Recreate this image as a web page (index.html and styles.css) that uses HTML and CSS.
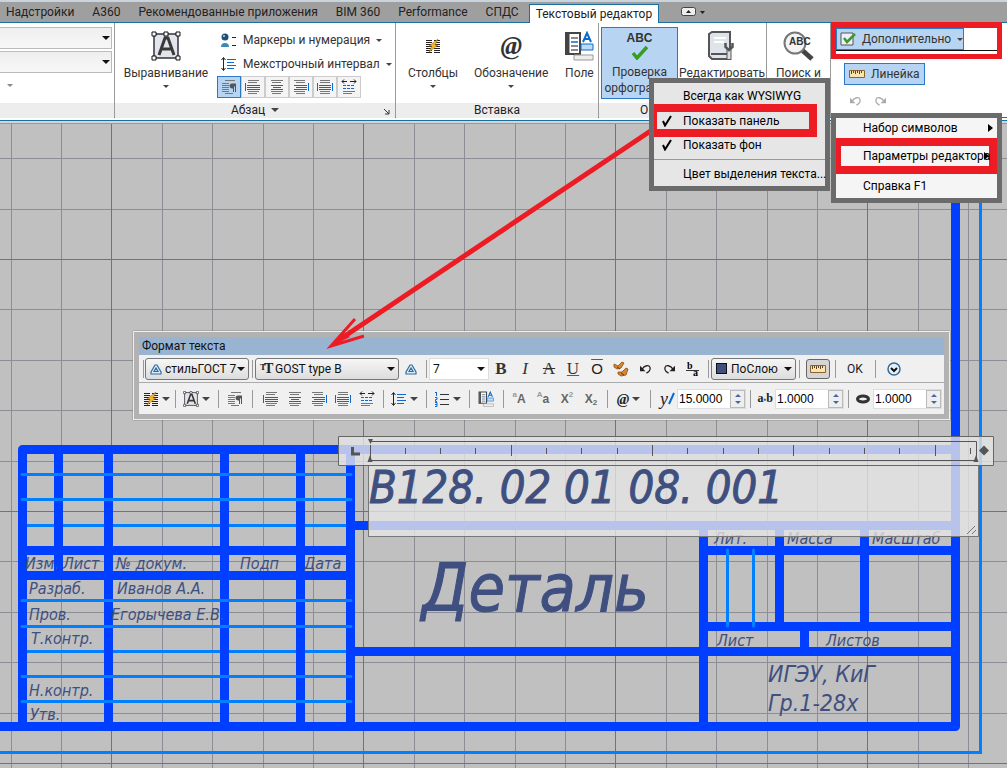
FILE: index.html
```html
<!DOCTYPE html>
<html lang="ru">
<head>
<meta charset="utf-8">
<title>Текстовый редактор</title>
<link rel="stylesheet" href="styles.css">
</head>
<body>
<svg class="defs" aria-hidden="true">
  <defs>
    <symbol id="i-para" viewBox="0 0 16 16"><path d="M4 1.500h10M1 4.500h7M1 6.500h7M1 8.500h7M1 10.500h7M1 12.500h7M4 14.500h8" stroke="#777" /><path d="M12.500 5v8M14.500 5v8" stroke="#555"/><path d="M15 4.500h-4a2.500 2.500 0 0 0 0 5h1.500z" fill="#555"/></symbol>
    <symbol id="i-al1" viewBox="0 0 16 16"><path d="M3 1.500h11M3 3.500h9M3 12.500h11M3 14.500h9" stroke="#777"/><path d="M.5 4v8M2 6.500h13M2 8.500h13M2 10.500h13" stroke="#0a6ad0"/></symbol>
    <symbol id="i-al2" viewBox="0 0 16 16"><path d="M2 1.500h12M3 3.500h9M2 12.500h12M3 14.500h9" stroke="#777"/><path d="M2 6.500h12M4 8.500h8M2 10.500h12" stroke="#0a6ad0"/></symbol>
    <symbol id="i-al3" viewBox="0 0 16 16"><path d="M1 1.500h11M3 3.500h9M1 12.500h11M3 14.500h9" stroke="#777"/><path d="M15.500 4v8M1 6.500h13M3 8.500h11M1 10.500h13" stroke="#0a6ad0"/></symbol>
    <symbol id="i-al4" viewBox="0 0 16 16"><path d="M3 1.500h10M3 3.500h10M3 12.500h10M3 14.500h10" stroke="#777"/><path d="M.5 4v8M15.500 4v8M2 6.500h12M2 8.500h12M2 10.500h12" stroke="#0a6ad0"/></symbol>
    <symbol id="i-al5" viewBox="0 0 16 16"><path d="M1 2.500h5M9 2.500h6M3 .500L1 2.500l2 2M13 .500l2 2-2 2" stroke="#222" fill="none"/><path d="M2 6.500h12M2 9.500h12" stroke="#0a6ad0" stroke-dasharray="3 1"/><path d="M2 12.500h12M2 14.500h9" stroke="#777"/></symbol>
    <symbol id="i-cols" viewBox="0 0 16 16"><path d="M1 2.500h6M1 4.500h6M1 6.500h6M1 8.500h6M1 10.500h6M1 12.500h6M1 14.500h6M9 2.500h6M9 4.500h6M9 6.500h6M9 8.500h6M9 10.500h6M9 12.500h6M9 14.500h6" stroke="#222"/><path d="M13 1L4 8h3l-3 6 9-7h-3z" fill="#f7b52c" stroke="#9a6412" stroke-width=".5"/></symbol>
    <symbol id="i-box" viewBox="0 0 30 30"><path d="M3 3h24v24H3z" fill="#e3e5ea" stroke="#334" stroke-width="1.500"/><path d="M8 24L14 7h3l6 17M10.500 18h10" fill="none" stroke="#3a3a3a" stroke-width="3"/><path d="M1 1h4v4H1zM13 1h4v4h-4zM25 1h4v4h-4zM1 25h4v4H1zM25 25h4v4h-4z" fill="#fff" stroke="#111"/></symbol>
    <symbol id="i-lines" viewBox="0 0 16 16"><path d="M2.500 2v12M.5 4l2-2.500 2 2.500M.5 12l2 2.500 2-2.500" stroke="#222" fill="none"/><path d="M6 3.500h9M6 6.500h7M6 9.500h9M6 12.500h7" stroke="#0a6ad0"/></symbol>
    <symbol id="i-field" viewBox="0 0 30 30"><path d="M2 2h14v21H2z" fill="#fff" stroke="#444" stroke-width="2"/><path d="M4 2v21" stroke="#444" stroke-width="3"/><path d="M7 7h7M7 15h7M7 19h7" stroke="#666" stroke-width="1.500"/><path d="M7 11h7" stroke="#0a6ad0" stroke-width="1.500"/><path d="M19 11l4-9 4 9M20.500 8h5" fill="none" stroke="#0a6ad0" stroke-width="2"/><path d="M17 13h12v6H17z" fill="#bcdcf5" stroke="#0a6ad0"/><path d="M10 24h19v5H10z" fill="#eee" stroke="#999"/></symbol>
    <symbol id="i-undo" viewBox="0 0 14 12"><path d="M3 7c3-5 8-5 9-2 .5 3-2 5-4 6" fill="none" stroke="currentColor" stroke-width="1.400"/><path d="M1 3v6h6z" fill="currentColor"/></symbol>
    <symbol id="i-redo" viewBox="0 0 14 12"><path d="M11 7C8 2 3 2 2 5c-.5 3 2 5 4 6" fill="none" stroke="currentColor" stroke-width="1.400"/><path d="M13 3v6H7z" fill="currentColor"/></symbol>
    <symbol id="i-ruler" viewBox="0 0 16 8"><path d="M.5.500h15v7H.5z" fill="#fbe3ae" stroke="#8a6330"/><path d="M2.500 1v3M4.500 1v2M6.500 1v3M8.500 1v2M10.500 1v3M12.500 1v2" stroke="#5f4018"/></symbol>
    <symbol id="i-style" viewBox="0 0 12 12"><path d="M5 2h2l4 7v2H1V9zM6 5L4 8.500h4z" fill="#dcecf8" fill-rule="evenodd" stroke="#2f6d9e" stroke-width="1.200"/></symbol>
    <symbol id="i-check" viewBox="0 0 10 12"><path d="M1 6l2 4.500L9 1" fill="none" stroke="#000" stroke-width="2"/></symbol>
  </defs>
</svg>

<header class="ribbon">
  <nav class="tabs">
    <a href="#">Надстройки</a><a href="#">A360</a><a href="#">Рекомендованные приложения</a><a href="#">BIM 360</a><a href="#">Performance</a><a href="#">СПДС</a><a href="#" class="active">Текстовый редактор</a>
    <button class="collapse" aria-label="Свернуть ленту"><svg width="26" height="10"><rect x=".5" y=".5" width="14" height="8" rx="2" fill="#eee" stroke="#444"/><path d="M5 6l2.500-3L10 6zM19 4h5l-2.500 3z" fill="#222"/></svg></button>
  </nav>
  <div class="panels">
    <section class="panel p-style">
      <div class="body">
        <span class="drop wide"><select aria-label="Слой"><option></option></select></span>
        <span class="drop wide"><select aria-label="Цвет"><option></option></select></span>
        <i class="tri pale"></i>
      </div>
      <h2>&nbsp;</h2>
    </section>
    <section class="panel p-para">
      <div class="body">
        <button class="big"><svg width="30" height="30"><use href="#i-box"/></svg><span>Выравнивание</span><i class="tri"></i></button>
        <div class="rows">
          <button class="line"><svg width="16" height="16"><circle cx="4" cy="5" r="3.500" fill="#1d4f78"/><circle cx="3" cy="4" r="1" fill="#cde"/><path d="M0 15a4 4 0 0 1 8 0z" fill="#3c88b8"/><path d="M11 5.500h4M11 13.500h4" stroke="#222"/></svg><span>Маркеры и нумерация</span><i class="tri"></i></button>
          <button class="line"><svg width="16" height="16"><use href="#i-lines"/></svg><span>Межстрочный интервал</span><i class="tri"></i></button>
          <div class="aligns">
            <button class="on" aria-label="По умолчанию"><svg width="16" height="16"><use href="#i-para"/></svg></button><button aria-label="Влево"><svg width="16" height="16"><use href="#i-al1"/></svg></button><button aria-label="По центру"><svg width="16" height="16"><use href="#i-al2"/></svg></button><button aria-label="Вправо"><svg width="16" height="16"><use href="#i-al3"/></svg></button><button aria-label="По ширине"><svg width="16" height="16"><use href="#i-al4"/></svg></button><button aria-label="Распределить"><svg width="16" height="16"><use href="#i-al5"/></svg></button>
          </div>
        </div>
      </div>
      <h2>Абзац <i class="tri big-tri"></i><svg class="launch" width="6" height="6"><path d="M0 0l5 5M5 1v4H1" fill="none" stroke="#333"/></svg></h2>
    </section>
    <section class="panel p-insert">
      <div class="body">
        <button class="big"><svg width="30" height="30" viewBox="-7 -7 30 30"><use href="#i-cols" width="16" height="16"/></svg><span>Столбцы</span><i class="tri"></i></button>
        <button class="big"><b class="at">@</b><span>Обозначение</span><i class="tri"></i></button>
        <button class="big"><svg width="30" height="30"><use href="#i-field"/></svg><span>Поле</span></button>
      </div>
      <h2>Вставка</h2>
    </section>
    <section class="panel p-spell">
      <div class="body">
        <button class="big on"><span class="abc">ABC</span><svg class="tick" width="18" height="15"><path d="M2 8l4 5L16 2" fill="none" stroke="#3a9d23" stroke-width="3.500"/></svg><span>Проверка орфографии</span></button>
        <button class="big"><svg width="30" height="30"><path d="M5 1h18v27H5l-3-3V3z" fill="#dfe3ea" stroke="#555" stroke-width="2"/><path d="M4 23h19" stroke="#555" stroke-width="2"/><path d="M7 7h12M7 11h10" stroke="#fff" stroke-width="2"/><path d="M22 29V18" stroke="#555" stroke-width="5"/><path d="M22 28V18" stroke="#ddd" stroke-width="3"/><path d="M18.500 12v4l3.500 3 3.500-3v-4" fill="none" stroke="#555" stroke-width="2.500"/></svg><span>Редактировать</span></button>
      </div>
      <h2>О</h2>
    </section>
    <section class="panel p-find">
      <div class="body">
        <button class="big"><svg width="32" height="30"><path d="M19 19l10 9" stroke="#444" stroke-width="5"/><circle cx="12" cy="12" r="10.500" fill="#f4f4f4" stroke="#777" stroke-width="2"/><text x="6" y="14" class="abc-s">ABC</text></svg><span>Поиск и</span></button>
      </div>
      <h2>&nbsp;</h2>
    </section>
    <section class="panel p-tools">
      <div class="frame-top"><button class="chip more"><svg width="16" height="14"><path d="M1 1h12v12H1z" fill="#eef" stroke="#555"/><path d="M4 6l3 4 8-8" fill="none" stroke="#3a9d23" stroke-width="2.500"/></svg>Дополнительно<i class="tri"></i></button></div>
      <button class="chip ruler-btn"><svg width="16" height="8"><use href="#i-ruler"/></svg>Линейка</button>
      <div class="history"><button aria-label="Отменить"><svg width="13" height="11"><use href="#i-undo"/></svg></button><button aria-label="Повторить"><svg width="13" height="11"><use href="#i-redo"/></svg></button></div>
    </section>
  </div>
</header>

<main class="canvas">
  <svg class="drawing" width="100%" height="100%">
    <g transform="translate(0 -124)">
      <defs>
        <pattern id="grid" x="111" y="259" width="252" height="252" patternUnits="userSpaceOnUse">
          <path d="M51.500 0v252M101.500 0v252M152.500 0v252M202.500 0v252M0 50.500h252M0 101.500h252M0 151.500h252M0 202.500h252" stroke="#8d8d96"/>
          <path d="M.5 0v252M0 .5h252" stroke="#717180"/>
        </pattern>
      </defs>
      <rect x="0" y="0" width="100%" height="200%" fill="url(#grid)"/>
      <g class="thin"><path d="M22 525.500H350M22 651.500H350"/></g>
      <g class="thick">
        <path d="M22.500 726.500V449.500H955.500M955.500 180V726.500H0M58.500 450V575M108.500 450V726M224.500 450V726M300.500 450V726M350.500 450V726M22 550.500H350M22 575.500H350M350 525.500H955M350 651.500H955M703.500 525V726M779.500 525V626M864.500 525V626M703 550.500H955M703 626.500H955M804.500 626V651"/>
      </g>
      <g class="thin">
        <path d="M22 474.500H351M22 499.500H351M22 600.500H351M22 626.500H351M22 676.500H351M22 701.500H351M727.500 550V626M753.500 550V626M0 752.500H980.500V180"/>
      </g>
      <g class="gost small">
        <text x="25" y="569">Изм.</text><text x="63" y="569">Лист</text><text x="116" y="569">№ докум.</text><text x="240" y="569">Подп</text><text x="304" y="569">Дата</text>
        <text x="29" y="594">Разраб.</text><text x="117" y="594">Иванов А.А.</text>
        <text x="29" y="620">Пров.</text><text x="111" y="620">Егорычева Е.В.</text>
        <text x="31" y="644">Т.контр.</text><text x="29" y="696">Н.контр.</text><text x="30" y="720">Утв.</text>
        <text x="714" y="544">Лит.</text><text x="787" y="544">Масса</text><text x="872" y="544">Масштаб</text>
        <text x="717" y="646">Лист</text><text x="826" y="646">Листов</text>
      </g>
      <g class="gost medium"><text x="768" y="682">ИГЭУ, КиГ</text><text x="768" y="711">Гр.1-28х</text></g>
      <text class="gost title" x="422" y="611">Деталь</text>
    </g>
  </svg>

  <div class="editor">
    <svg class="scale" width="656" height="30">
      <path d="M.5.500h655v29H.5z" fill="#e5e5e5" fill-opacity=".8" stroke="#666"/>
      <path d="M32 5.500h606.500v19H32" fill="none" stroke="#555"/>
      <path d="M32.500 9v13M173.500 9v11M314.500 9v11M455.500 9v11M597.500 9v11M67.500 12v6M102.500 12v6M137.500 12v6M208.500 12v6M243.500 12v6M279.500 12v6M349.500 12v6M385.500 12v6M420.500 12v6M491.500 12v6M526.500 12v6M561.500 12v6M632.500 12v6" stroke="#555"/>
      <path d="M30 3h5l-2.500 5zM29.500 26h5L32 19zM635.500 26h5L638 19zM646 9.500l5 5-5 5-5-5z" fill="#555"/>
      <path d="M14.500 11v7H22" fill="none" stroke="#555" stroke-width="3"/>
    </svg>
    <input class="gost text" aria-label="Текст" value="B128. 02 01 08. 001">
    <svg class="grip" width="10" height="10"><path d="M0 9l8-8M5 9l4-4" stroke="#777"/></svg>
  </div>

  <section class="format" aria-label="Формат текста">
    <h2>Формат текста</h2>
    <div class="row r1">
      <i class="sep handle"></i>
      <span class="drop btnlike w-style"><svg width="12" height="12"><use href="#i-style"/></svg><select aria-label="Стиль"><option>стильГОСТ 7</option></select></span>
      <i class="sep"></i>
      <span class="drop btnlike w-font"><b class="tt"><small>T</small>T</b><select aria-label="Шрифт"><option>GOST type B</option></select></span>
      <button aria-label="Аннотативный"><svg width="12" height="12"><use href="#i-style"/></svg></button>
      <i class="sep"></i>
      <span class="drop size"><select aria-label="Высота"><option>7</option></select></span>
      <button class="serif"><b>B</b></button><button class="serif"><em>I</em></button><button class="serif"><s>A</s></button><button class="serif under">U</button><button class="sans over">O</button>
      <button aria-label="Копировать формат"><svg width="16" height="16"><path d="M1 3l4 2 4-4 2 1-3 5-4 1-3-2zM5 11l4 0 4-4 2 1-2 6-5 1-3-2z" fill="#d8882c" stroke="#8a4b12" stroke-width=".8"/><path d="M4 6l3 2M8 12l3 2" stroke="#6b3508"/></svg></button>
      <button aria-label="Отменить"><svg width="13" height="11"><use href="#i-undo"/></svg></button><button aria-label="Повторить"><svg width="13" height="11"><use href="#i-redo"/></svg></button>
      <button class="stack" aria-label="Дробь"><svg width="16" height="16"><text x="2" y="8">b</text><path d="M1 9.500h13" stroke="#333"/><text x="8" y="15">a</text></svg></button>
      <i class="sep"></i>
      <span class="drop btnlike w-color"><i class="swatch"></i><select aria-label="Цвет"><option>ПоСлою</option></select></span>
      <i class="sep"></i>
      <button class="pressed" aria-label="Линейка"><svg width="16" height="8"><use href="#i-ruler"/></svg></button>
      <i class="sep"></i>
      <button class="ok">OK</button>
      <i class="sep"></i>
      <button class="opt" aria-label="Параметры"><svg width="14" height="14"><circle cx="7" cy="7" r="6" fill="#e8f0f8" stroke="#356a98" stroke-width="1.500"/><path d="M4 6l3 3 3-3" fill="none" stroke="#111" stroke-width="2"/></svg></button>
    </div>
    <div class="row r2">
      <button class="dd"><svg width="16" height="16"><use href="#i-cols"/></svg><i class="tri"></i></button>
      <i class="sep"></i>
      <button class="dd wide"><svg width="16" height="16"><use href="#i-box"/></svg><i class="tri"></i></button>
      <i class="sep"></i>
      <button class="w26" aria-label="Абзац"><svg width="16" height="16"><use href="#i-para"/></svg></button>
      <i class="sep"></i>
      <span class="group"><button aria-label="Влево"><svg width="16" height="16"><use href="#i-al1"/></svg></button><button aria-label="По центру"><svg width="16" height="16"><use href="#i-al2"/></svg></button><button aria-label="Вправо"><svg width="16" height="16"><use href="#i-al3"/></svg></button><button aria-label="По ширине"><svg width="16" height="16"><use href="#i-al4"/></svg></button><button aria-label="Распределить"><svg width="16" height="16"><use href="#i-al5"/></svg></button></span>
      <i class="sep"></i>
      <button class="dd wide"><svg width="16" height="16"><use href="#i-lines"/></svg><i class="tri"></i></button>
      <i class="sep"></i>
      <button class="dd wide"><svg width="16" height="16"><path d="M6 3.500h9M6 8.500h9M6 13.500h9" stroke="#333"/><path d="M2.500 1v4M1 1.500h1.500M1 6.500h2v2H1.500v2H3M1 11.500h2v4H1M1 13.500h2" fill="none" stroke="#0a6ad0"/></svg><i class="tri"></i></button>
      <i class="sep"></i>
      <button class="w26" aria-label="Поле"><svg width="16" height="16"><use href="#i-field"/></svg></button>
      <i class="sep"></i>
      <button class="cs"><small class="hi">a</small>A</button><button class="cs"><small class="hi">A</small>a</button><button class="cs">X<sup>2</sup></button><button class="cs">X<sub>2</sub></button>
      <i class="sep"></i>
      <button class="dd wide"><b class="at-s">@</b><i class="tri"></i></button>
      <i class="sep"></i>
      <label class="spin first"><span class="slant">y<svg width="7" height="13"><path d="M1 12L6 1" stroke="#0a6ad0" stroke-width="2"/></svg></span><span class="num"><input value="15.0000" aria-label="Угол наклона"><i class="ud"></i></span></label>
      <i class="sep"></i>
      <label class="spin"><span class="ab">a<i>▪</i>b</span><span class="num"><input value="1.0000" aria-label="Межсимвольный интервал"><i class="ud"></i></span></label>
      <i class="sep"></i>
      <label class="spin"><svg width="16" height="10"><ellipse cx="8" cy="5" rx="5.500" ry="3" fill="none" stroke="#333" stroke-width="3"/></svg><span class="num"><input value="1.0000" aria-label="Коэффициент ширины"><i class="ud"></i></span></label>
    </div>
  </section>

  <svg class="callout" width="100%" height="100%">
    <path d="M652 6L336 218" stroke="#ed1c24" stroke-width="5"/>
    <path d="M355 195L331 222L364 212" fill="none" stroke="#ed1c24" stroke-width="3"/>
    <path d="M331 222L343 209L350 213z" fill="#ed1c24"/>
  </svg>
</main>

<div class="menu m-editor">
  <button>Всегда как WYSIWYG</button>
  <button class="marked"><svg width="10" height="12"><use href="#i-check"/></svg>Показать панель</button>
  <button><svg width="10" height="12"><use href="#i-check"/></svg>Показать фон</button>
  <hr>
  <button>Цвет выделения текста...</button>
</div>
<div class="menu m-more">
  <button>Набор символов<i class="arrow"></i></button>
  <button class="marked">Параметры редактора<i class="arrow"></i></button>
  <button>Справка F1</button>
</div>
</body>
</html>
```
FILE: styles.css
```css
* { box-sizing: border-box; }
body {
  margin: 0; min-height: 100vh; display: flex; flex-direction: column;
  position: relative; overflow: hidden;
  font: 12px/16px Roboto, "Open Sans", sans-serif; color: #333; background: #c0c0c0;
}
.defs { position: absolute; width: 0; height: 0; }
button { font: inherit; color: inherit; background: none; border: 0; padding: 0; margin: 0; }
h2 { margin: 0; font: inherit; }
svg { flex: none; }
.tri { display: inline-block; border: solid transparent; border-width: 3px 3px 0; border-top-color: #444; flex: none; }
.big-tri { border-width: 4px 4px 0; vertical-align: 2px; margin-left: 3px; }

/* ribbon */
.ribbon { height: 124px; background: #d4d4d4; border-bottom: 1px solid #999; display: flex; flex-direction: column; }
.tabs { height: 23px; flex: none; display: flex; align-items: flex-end; gap: 18px; padding-left: 6px; background: #9f9f9f; border-top: 2px solid #c9d4df; border-bottom: 1px solid #1a6fa3; }
.tabs a { color: #222; text-decoration: none; line-height: 19px; white-space: nowrap; }
.tabs .active { background: #fff; border: 1px solid #1a6fa3; border-bottom: 0; padding: 0 6px; margin: 0 0 -1px -8px; line-height: 18px; }
.collapse { align-self: center; height: 14px; margin-left: 4px; }
.panels { display: flex; height: 98px; flex: none; background: #fff; border-bottom: 1px solid #1a6fa3; }
.panel { border-right: 1px solid #9a9a9a; margin-bottom: 2px; border-bottom: 1px solid #1a6fa3; display: flex; flex-direction: column; flex: none; }
.panel .body { height: 80px; flex: none; display: flex; padding-top: 4px; }
.panel h2 { background: #ededed; text-align: center; height: 15px; line-height: 15px; color: #222; position: relative; flex: none; }
.launch { position: absolute; right: 5px; bottom: 3px; }
.p-style { width: 115px; }
.p-style .body { flex-direction: column; gap: 2px; }
.drop { position: relative; display: block; }
.drop select { appearance: none; font: inherit; color: #111; width: 100%; height: 100%; border: 1px solid #bbb; background: transparent; padding: 0 3px; margin: 0; display: block; border-radius: 0; }
.drop::after { content: ""; position: absolute; right: 4px; top: 50%; margin-top: -2px; border: solid transparent; border-width: 4px 4px 0; border-top-color: #111; pointer-events: none; }
.drop.wide { height: 22px; width: 113px; margin-left: -1px; background: linear-gradient(#eee, #f8f8f8); }
.drop.wide::after { right: 2px; }
.pale { margin: 9px 0 0 7px; align-self: flex-start; border-top-color: #888; }
.big { display: flex; flex-direction: column; align-items: center; padding-top: 4px; gap: 4px; }
.big span { line-height: 16px; }
.p-para { width: 281px; }
.p-para .big { width: 102px; }
.rows { display: flex; flex-direction: column; }
.line { height: 24px; display: flex; align-items: center; gap: 6px; padding: 2px 0 0 4px; white-space: nowrap; }
.aligns { display: flex; margin-top: 1px; }
.aligns button { width: 24px; height: 22px; border: 1px solid #ccc; background: #f4f4f4; display: grid; place-items: center; }
.aligns .on { background: #b7d5f2; border-color: #2b78c5; }
.p-insert { width: 203px; }
.p-insert .body { gap: 16px; padding-left: 12px; }
.p-insert .big { min-width: 29px; }
.at { font: bold italic 26px/30px "Liberation Serif", serif; }
.p-spell { width: 168px; }
.p-spell .body { padding-left: 2px; gap: 2px; }
.p-spell h2 { text-align: left; padding-left: 41px; }
.p-spell .big { width: 84px; }
.p-spell .big.on { width: 77px; height: 72px; background: #b7d5f2; border: 1px solid #2b78c5; gap: 0; }
.p-spell .on .tick { margin-bottom: 4px; }
.p-spell .on span:last-child { width: 74px; }
.big .abc { font: bold 12px/13px "Liberation Sans", sans-serif; }
.abc-s { font: bold 10px "Liberation Sans", sans-serif; fill: #333; }
.p-find { width: 64px; align-items: stretch; }
.p-find .body { justify-content: center; }
.p-tools { flex: 1; border-right: 0; align-items: flex-start; }
.frame-top { width: 171px; height: 37px; margin-top: -1px; border: 5px solid #ed1c24; border-top-width: 6px; background: linear-gradient(#111, #111) 0 22px / 100% 1px no-repeat #fff; position: relative; }
.chip { display: flex; align-items: center; gap: 6px; height: 22px; background: #b7d5f2; border: 1px solid #2b78c5; padding: 0 4px; }
.more { width: 128px; white-space: nowrap; padding: 0 3px; }
.ruler-btn { margin: 4px 0 0 13px; }
.history { display: flex; gap: 12px; margin: 9px 0 0 18px; color: #aaa; height: 11px; }
.history button { display: block; height: 11px; }

/* drawing */
.canvas { flex: 1; position: relative; min-height: 0; }
.drawing, .callout { position: absolute; inset: 0; display: block; }
.callout { pointer-events: none; }
.thick { stroke: #003fff; stroke-width: 9; fill: none; stroke-linejoin: round; }
.thin { stroke: #007fff; stroke-width: 3; fill: none; stroke-linecap: round; }
.gost { font-family: "DejaVu Sans Condensed", "DejaVu Sans", sans-serif; font-style: italic; fill: #3f4f80; color: #3f4f80; }
.small { font-size: 16px; }
.medium { font-size: 23px; }
.title { font-size: 66px; stroke: #3f4f80; stroke-width: 1; }

.editor { position: absolute; left: 338px; top: 312px; width: 656px; }
.scale { display: block; }
.editor .text { display: block; margin: -1px 0 0 30px; width: 611px; height: 72px; border: 1px solid #777; background: rgba(229, 229, 229, .8); font-size: 45px; padding: 0 0 28px; -webkit-text-stroke: 1px #3f4f80; }
.grip { position: absolute; right: 17px; bottom: 2px; }

/* floating toolbar */
.format { position: absolute; left: 133px; top: 207px; width: 817px; border: 6px solid #b2b2b2; outline: 1px solid #eee; outline-offset: -1px; background: #f0f0f0; box-shadow: 0 0 1px #444; color: #222; }
.format > h2 { background: #99b4d1; line-height: 18px; padding-left: 3px; color: #111; }
.row { display: flex; align-items: center; padding-left: 3px; }
.r1 { height: 28px; border-bottom: 1px solid #aaa; }
.r2 { height: 31px; }
.row button { width: 24px; height: 22px; display: flex; align-items: center; justify-content: center; flex: none; }
.sep { width: 6px; height: 18px; flex: none; background: linear-gradient(#999, #999) center / 1px 100% no-repeat; }
.handle { width: 3px; }
.r2 .sep { width: 8px; }
.row .drop { height: 22px; flex: none; }
.btnlike select { border: 1px solid #777; border-radius: 3px; background: linear-gradient(#f6f6f6, #ddd); padding: 0 0 0 19px; }
.btnlike > svg, .btnlike > b, .btnlike > i { position: absolute; left: 5px; top: 5px; z-index: 1; }
.w-style { width: 104px; }
.w-font { width: 144px; }
.w-color { width: 85px; }
.tt { font: bold 14px/12px "Liberation Serif", serif; display: flex; }
.tt small { font-size: 9px; line-height: 8px; margin-right: -2px; }
.swatch { width: 11px; height: 11px; background: #3f4f80; border: 1px solid #111; }
.size { width: 60px; }
.size select { background: #fff; border-color: #ddd; }
.row .serif { font: 17px/20px "Liberation Serif", serif; color: #333; }
.row .sans { font: 15px/16px "Liberation Sans", sans-serif; }
.under { text-decoration: underline; text-decoration-color: #0a6ad0; }
.over { text-decoration: overline; text-decoration-color: #0a6ad0; }
.stack text { font: bold 10px "Liberation Serif", serif; }
.row .pressed { width: 24px; height: 20px; border: 1px solid #666; border-radius: 3px; background: #d5d5d5; margin: 0 2px 0 4px; }
.row .ok { width: 34px; }
.row .opt { width: 32px; }
.row .dd { width: 29px; gap: 3px; }
.dd .tri { border-width: 4px 4px 0; }
.row .dd.wide { width: 35px; }
.row .w26 { width: 26px; }
.group { display: flex; width: 123px; padding-left: 3px; }
.row .cs { font: bold 12px/20px "Liberation Sans", sans-serif; color: #666; }
.cs small, .cs sup, .cs sub { font-size: 8px; line-height: 8px; }
.cs .hi, .cs sup { align-self: flex-start; color: #999; margin-top: 3px; }
.cs sub { align-self: flex-end; margin-bottom: 3px; }
.at-s { font: bold italic 15px/16px "Liberation Serif", serif; }
.spin { display: flex; align-items: center; justify-content: flex-end; gap: 2px; width: 90px; flex: none; }
.spin.first { width: 92px; }
.slant { font: italic 18px/20px "Liberation Serif", serif; }
.ab { font: bold 12px/16px "Liberation Serif", serif; white-space: nowrap; }
.ab i { color: #0a6ad0; font-size: 8px; }
.num { display: flex; width: 69px; height: 20px; background: #fff; border: 1px solid #ddd; }
.num input { width: 52px; border: 0; padding: 0 0 0 1px; font: 12px/18px "Liberation Sans", sans-serif; background: none; min-width: 0; }
.ud { width: 15px; flex: none; border: 1px solid #bbb; background: #eee; position: relative; }
.ud::before, .ud::after { content: ""; position: absolute; left: 4px; border: solid transparent; }
.ud::before { top: 3px; border-width: 0 3px 3px; border-bottom-color: #46a; }
.ud::after { bottom: 3px; border-width: 3px 3px 0; border-top-color: #46a; }

/* menus */
.menu { position: absolute; border: 5px solid #6b6b6b; color: #000; display: flex; flex-direction: column; }
.menu button { text-align: left; display: flex; align-items: center; white-space: nowrap; position: relative; }
.m-editor { left: 649px; top: 78px; width: 181px; background: #e6e6e6; }
.m-editor button { height: 25px; padding-left: 29px; }
.m-editor svg { position: absolute; left: 8px; }
.m-editor .marked { height: 33px; margin: -4px 8px -5px 0; border: 8px solid #ed1c24; border-left-width: 3px; padding-left: 26px; }
.m-editor .marked svg { left: 5px; }
.m-editor hr { width: 100%; margin: 2px 0 1px; border: 0; border-top: 1px solid #999; }
.m-more { left: 831px; top: 113px; width: 171px; background: #f5f5f5; }
.m-more button { height: 20px; padding-left: 27px; }
.m-more .marked { height: 36px; border: 8px solid #ed1c24; border-left-width: 5px; padding-left: 22px; }
.m-more button:last-child { height: 24px; }
.arrow { position: absolute; right: 4px; border: solid transparent; border-width: 4px 0 4px 5px; border-left-color: #000; }
.marked .arrow { right: 0; }
```
